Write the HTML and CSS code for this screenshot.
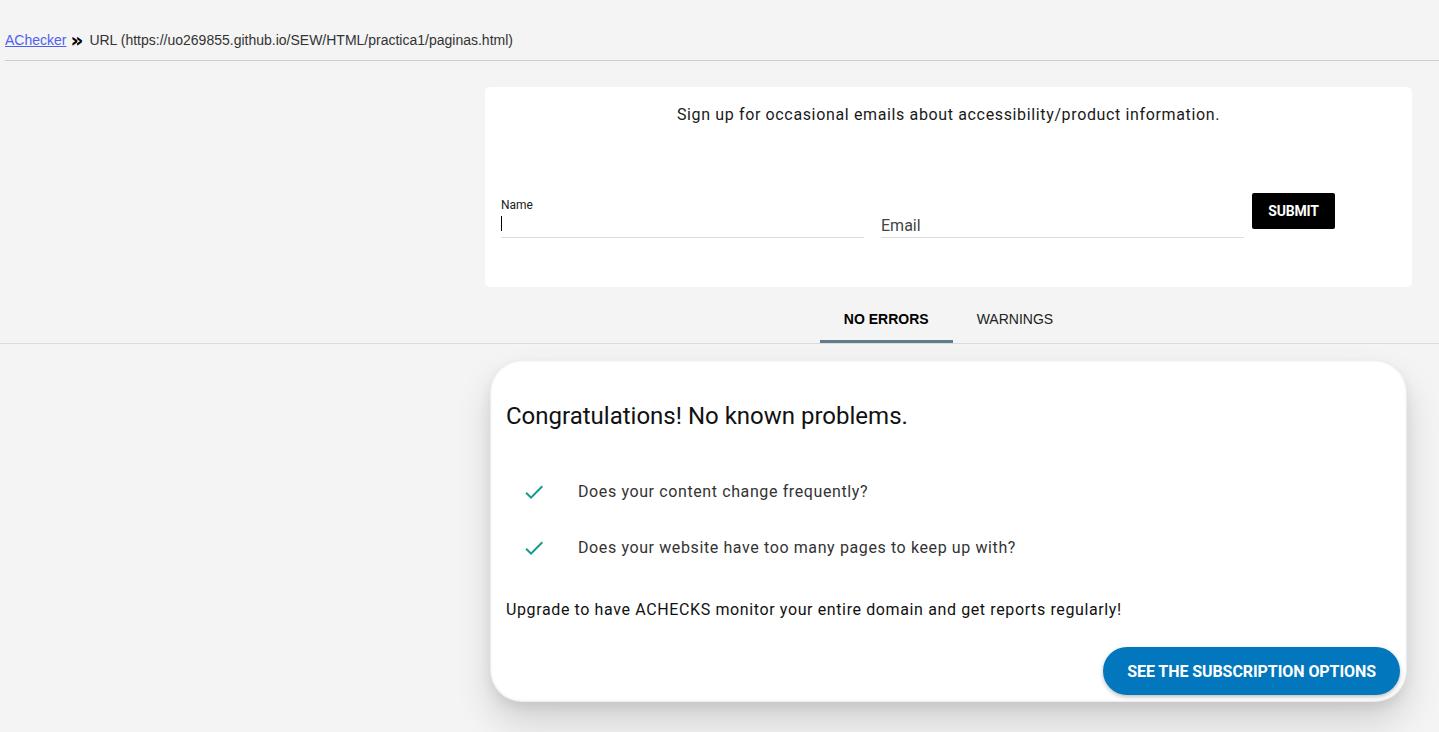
FILE: index.html
```html
<!DOCTYPE html>
<html lang="en">
<head>
<meta charset="utf-8">
<title>AChecker</title>
<link rel="stylesheet" href="styles.css">
</head>
<body>
<header class="top">
  <nav class="crumbs">
    <a class="crumb-link" href="#">AChecker</a>
    <span class="crumb-sep">&raquo;</span>
    <span class="crumb-current">URL (https://uo269855.github.io/SEW/HTML/practica1/paginas.html)</span>
  </nav>
</header>

<main class="main">
  <section class="signup">
    <p class="signup-title">Sign up for occasional emails about accessibility/product information.</p>
    <form class="signup-form">
      <div class="field">
        <label class="field-label" for="name">Name</label>
        <div class="field-box">
          <input class="field-input" id="name" type="text">
          <span class="caret"></span>
        </div>
      </div>
      <div class="field">
        <span class="field-label"></span>
        <div class="field-box">
          <input class="field-input" type="email" placeholder="Email">
        </div>
      </div>
      <button class="submit" type="button">SUBMIT</button>
    </form>
  </section>
</main>

<div class="tabbar">
  <div class="tabs">
    <div class="tab tab-active">NO ERRORS</div>
    <div class="tab">WARNINGS</div>
  </div>
</div>

<main class="main">
  <section class="result">
    <h2 class="result-title">Congratulations! No known problems.</h2>
    <ul class="checks">
      <li class="check">
        <span class="check-icon"><svg viewBox="0 0 24 24" width="24" height="24"><path d="M9 16.17 4.83 12l-1.42 1.41L9 19 21 7l-1.41-1.41z" fill="#179a8c"/></svg></span>
        <span class="check-text">Does your content change frequently?</span>
      </li>
      <li class="check">
        <span class="check-icon"><svg viewBox="0 0 24 24" width="24" height="24"><path d="M9 16.17 4.83 12l-1.42 1.41L9 19 21 7l-1.41-1.41z" fill="#179a8c"/></svg></span>
        <span class="check-text">Does your website have too many pages to keep up with?</span>
      </li>
    </ul>
    <p class="upgrade">Upgrade to have ACHECKS monitor your entire domain and get reports regularly!</p>
    <div class="result-actions">
      <button class="cta" type="button">SEE THE SUBSCRIPTION OPTIONS</button>
    </div>
  </section>
</main>
</body>
</html>
```

FILE: styles.css
```css
html, body {
  margin: 0;
  padding: 0;
  background: #f4f4f4;
  height: 100%;
  overflow: hidden;
}

body {
  font-family: Roboto, "Liberation Sans", Arial, sans-serif;
  color: #222;
}

.top {
  padding: 31px 0 0 5px;
}

.crumbs {
  font-family: "Liberation Sans", Arial, sans-serif;
  font-size: 14px;
  line-height: 18px;
  color: #333;
  padding-bottom: 11px;
  border-bottom: 1px solid #cccccc;
  display: flex;
  align-items: center;
}

.crumb-link {
  color: #4f5ff0;
  text-decoration: underline;
}

.crumb-sep {
  font-family: "DejaVu Sans", sans-serif;
  font-weight: bold;
  font-size: 20px;
  color: #000;
  margin: -1px 6px 0 4px;
  line-height: 18px;
}

.crumb-current {
  color: #333;
}

.main {
  padding: 0 27px 0 485px;
}

.signup {
  margin-top: 26px;
  background: #fff;
  border-radius: 5px;
  height: 200px;
  box-sizing: border-box;
  padding: 16px 16px 0 16px;
}

.signup-title {
  margin: 0;
  text-align: center;
  font-size: 16px;
  line-height: 24px;
  letter-spacing: 0.64px;
  color: #1a1a1a;
}

.signup-form {
  margin-top: 66px;
  display: flex;
  align-items: flex-start;
}

.field {
  width: 363px;
  display: flex;
  flex-direction: column;
}

.field + .field {
  margin-left: 17px;
}

.field-label {
  font-size: 12px;
  line-height: 14px;
  height: 14px;
  margin-top: 5px;
  color: #222;
}

.field-box {
  position: relative;
  margin-top: 1px;
  border-bottom: 1px solid #dddddd;
}

.field-input {
  display: block;
  width: 100%;
  box-sizing: border-box;
  border: 0;
  outline: 0;
  background: transparent;
  padding: 0;
  height: 24px;
  font-family: Roboto, Arial, sans-serif;
  font-size: 16px;
  color: #222;
}

.field-input::placeholder {
  color: #444;
}

.caret {
  position: absolute;
  left: 0;
  top: 3px;
  width: 1px;
  height: 15px;
  background: #000;
}

.submit {
  margin-left: 8px;
  width: 83px;
  height: 36px;
  border: 0;
  border-radius: 2px;
  background: #000;
  color: #fff;
  font-family: Roboto, Arial, sans-serif;
  font-weight: 700;
  font-size: 14px;
  letter-spacing: -0.2px;
  padding: 0;
}

.tabbar {
  margin-top: 8px;
  border-bottom: 1px solid #dcdcdc;
  padding: 0 27px 0 485px;
}

.tabs {
  display: flex;
  justify-content: center;
}

.tab {
  height: 48px;
  box-sizing: border-box;
  padding: 0 24px;
  display: flex;
  align-items: center;
  font-family: "Liberation Sans", Arial, sans-serif;
  font-size: 14px;
  color: #222;
  border-bottom: 3px solid transparent;
  padding-top: 2px;
}

.tab-active {
  font-weight: bold;
  color: #000;
  border-bottom-color: #607d8b;
}

.result {
  margin: 16px 5px 0 5px;
  height: 342px;
  box-sizing: border-box;
  background: #fff;
  border-radius: 32px;
  padding: 40px 7px 0 16px;
  box-shadow: inset 0 0 3px rgba(0, 0, 0, 0.18), 0 20px 36px rgba(0, 0, 0, 0.14), 0 6px 12px rgba(0, 0, 0, 0.07);
}

.result-title {
  margin: 0;
  font-size: 24px;
  font-weight: 400;
  line-height: 32px;
  color: #111;
}

.checks {
  list-style: none;
  margin: 32px 0 0 0;
  padding: 0;
}

.check {
  height: 56px;
  display: flex;
  align-items: center;
  padding-left: 16px;
}

.check-icon {
  width: 56px;
  display: flex;
  align-items: center;
}

.check-icon svg {
  display: block;
}

.check-text {
  font-size: 16px;
  line-height: 24px;
  letter-spacing: 0.61px;
  color: #333;
}

.upgrade {
  margin: 22px 0 0 0;
  font-size: 16px;
  line-height: 24px;
  letter-spacing: 0.62px;
  color: #111;
}

.result-actions {
  display: flex;
  justify-content: flex-end;
  margin-top: 25px;
}

.cta {
  height: 48px;
  border: 0;
  border-radius: 24px;
  padding: 0 24px;
  background: #0277bd;
  color: #fff;
  font-family: Roboto, Arial, sans-serif;
  font-weight: 700;
  font-size: 16px;
  letter-spacing: -0.07px;
  box-shadow: 0 2px 4px rgba(0, 0, 0, 0.25);
}
```
